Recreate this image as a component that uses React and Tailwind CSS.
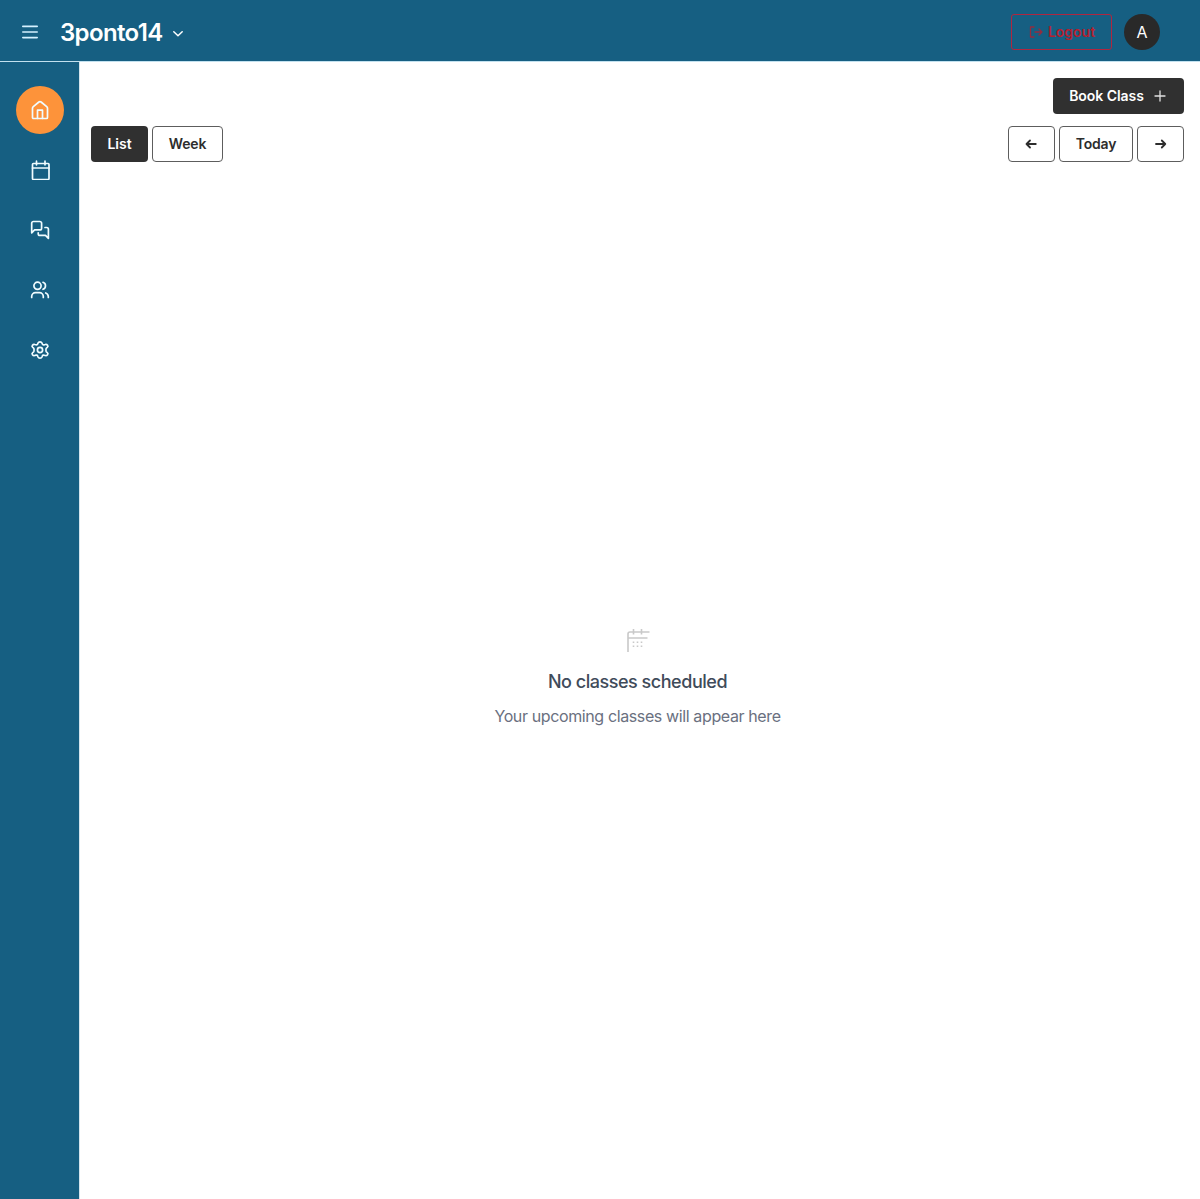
function Icon({ size = 20, width = 1.7, className = '', children }) {
  return (
    <svg
      width={size}
      height={size}
      viewBox={`0 0 ${size} ${size}`}
      fill="none"
      stroke="currentColor"
      strokeWidth={width}
      strokeLinecap="round"
      strokeLinejoin="round"
      className={`shrink-0 ${className}`}
    >
      {children}
    </svg>
  );
}

const nav = [
  {
    name: 'Home',
    active: true,
    icon: (
      <>
        <path d="M2.5 8.2c0-.6.3-1.2.8-1.6l5.6-4.6c.7-.6 1.5-.6 2.2 0l5.6 4.6c.5.4.8 1 .8 1.6v9.3c0 .6-.4 1-1 1h-13c-.6 0-1-.4-1-1z" />
        <path d="M7.5 18.300v-8.100h5v8.100" />
      </>
    ),
  },
  {
    name: 'Calendar',
    icon: (
      <>
        <rect x="2.5" y="3.5" width="16.5" height="16" rx="0.9" />
        <path d="M2.5 8h16.5M6.5 1.2v3.6M15 1.2v3.6" />
      </>
    ),
  },
  {
    name: 'Messages',
    icon: (
      <>
        <path d="M11.6 8.2a1.7 1.7 0 0 1-1.7 1.7H4.6L1.7 12.8V3.2a1.7 1.7 0 0 1 1.7-1.7h6.5a1.7 1.7 0 0 1 1.7 1.7z" />
        <path d="M15 7.500h1.700a1.700 1.700 0 0 1 1.700 1.700v9.100l-2.900-2.900H9.900a1.700 1.700 0 0 1-1.700-1.700v-.8" />
      </>
    ),
  },
  {
    name: 'People',
    icon: (
      <>
        <circle cx="7.5" cy="5.8" r="3.6" />
        <path d="M1.7 17.5v-1a3.8 3.8 0 0 1 3.8-3.8h4a3.8 3.8 0 0 1 3.8 3.8v1M13 2.300a3.700 3.700 0 0 1 0 7M15.700 13a3.900 3.900 0 0 1 2.600 3.600v.9" />
      </>
    ),
  },
  {
    name: 'Settings',
    icon: (
      <>
        <path
          transform="translate(-1.6 0) scale(1.16 1)"
          vectorEffect="non-scaling-stroke"
          d="M8.300 3c.3-.9.800-1.200 1.700-1.200s1.400.3 1.700 1.200l.3 1c.2.700.8 1 1.500.8l1-.3c.9-.3 1.500 0 2 .8s.5 1.500-.2 2.100l-.8.7c-.5.500-.5 3.300 0 3.800l.8.7c.7.600.7 1.300.2 2.100s-1.100 1.100-2 .8l-1-.3c-.7-.2-1.300.1-1.500.8l-.3 1c-.3.900-.8 1.200-1.700 1.200s-1.400-.3-1.700-1.200l-.3-1c-.2-.7-.8-1-1.500-.8l-1 .3c-.9.300-1.500 0-2-.8s-.5-1.500.2-2.100l.8-.7c.5-.5.500-3.300 0-3.800l-.8-.7c-.7-.6-.7-1.300-.2-2.100s1.100-1.100 2-.8l1 .3c.7.200 1.300-.1 1.500-.8z"
        />
        <circle cx="10" cy="10" r="2.6" />
      </>
    ),
  },
];

function Header() {
  return (
    <header className="flex h-[62px] shrink-0 items-center border-b border-[#c2e1ef] bg-[#165f82] pt-[3px] pr-10 pl-5 text-white">
      <button aria-label="Menu" className="text-[#d5f1ff]">
        <Icon width={1.6} className="block"><path d="M2.8 4.4h14.4M2.8 10h14.4M2.8 15.6h14.4" /></Icon>
      </button>
      <button className="ml-5 flex items-center pt-0.5">
        <span className="text-2xl font-semibold tracking-[-0.65px]">3ponto14</span>
        <Icon size={12} width={1.5} className="mt-0.5 ml-[9px]"><path d="M1.8 3.8 6 7.8l4.2-4" /></Icon>
      </button>
      <button className="ml-auto flex h-9 w-[101px] items-center justify-center rounded-[3px] border border-[#b0263f] text-sm font-semibold text-[#b4202f]">
        <Icon size={16} width={1.3} className="mr-1 opacity-80"><path d="M6 3H2.5v10H6M7 8h7M11 5l3 3-3 3" /></Icon>
        Logout
      </button>
      <div className="ml-3 flex size-9 items-center justify-center rounded-full bg-[#292929] text-base">A</div>
    </header>
  );
}

function Outline({ children, className, label }) {
  return (
    <button aria-label={label} className={`flex h-9 items-center justify-center rounded-[4px] border border-[#5d5d5d] text-sm font-semibold text-[#2d2d2d] ${className}`}>
      {children}
    </button>
  );
}

export default function App() {
  return (
    <div className="flex h-[1199px] w-[1200px] flex-col bg-white font-['Inter',sans-serif]">
      <Header />
      <div className="flex min-h-0 flex-1">
        <aside className="flex w-[79px] shrink-0 flex-col items-center gap-3 bg-[#165f82] pt-6 pl-px">
          {nav.map((item) => (
            <button
              key={item.name}
              aria-label={item.name}
              className={`flex size-12 items-center justify-center rounded-full text-[#f0fcff] ${item.active ? 'bg-[#fd933a]' : ''}`}
            >
              <Icon>{item.icon}</Icon>
            </button>
          ))}
        </aside>
        <main className="flex flex-1 flex-col border-l border-[#d5e5ed] pt-4 pr-4 pl-[11px]">
          <div className="flex justify-end">
            <button className="flex h-9 w-[131px] items-center justify-center rounded-[4px] bg-[#303030] text-sm font-semibold text-white">
              <span className="tracking-[-0.05px]">Book Class</span>
              <Icon size={16} width={1.3} className="ml-2 text-[#e0e0e0]"><path d="M8 3v10M3 8h10" /></Icon>
            </button>
          </div>
          <div className="mt-3 flex justify-between">
            <div className="flex gap-1">
              <button className="h-9 w-[57px] rounded-[4px] bg-[#303030] text-sm font-semibold text-white">List</button>
              <Outline className="w-[71px] tracking-[-0.15px]">Week</Outline>
            </div>
            <div className="flex gap-1">
              <Outline label="Previous" className="w-[47px]">
                <Icon size={14} width={1.8} className="mr-px"><path d="M11.8 7H2.5M6 3.500 2.500 7 6 10.500" /></Icon>
              </Outline>
              <Outline className="w-[74px] tracking-[-0.15px]">Today</Outline>
              <Outline label="Next" className="w-[47px]">
                <Icon size={14} width={1.8}><path d="M2 7h9.300M7.800 3.500 11.300 7 7.800 10.500" /></Icon>
              </Outline>
            </div>
          </div>
          <section className="flex flex-1 flex-col items-center pt-[466px]">
            <svg width="24" height="24" viewBox="0 0 24 24" fill="none" stroke="#c9c9c9" strokeWidth="1.6" className="mr-px ml-[2px]">
              <path d="M2 24V6a2 2 0 0 1 2-2h19.500M2 10h19.500M7.500 1v5.500M15.500 1v5.500" />
              <path d="M6.700 14.200h1.600m2.400 0h1.600m2.400 0h1.600M6.700 18.200h1.600m2.400 0h1.600m2.400 0h1.600" />
            </svg>
            <h2 className="mt-4 text-lg leading-7 font-medium tracking-[-0.47px] text-[#3f4b5a]">No classes scheduled</h2>
            <p className="mt-2 text-base leading-6 tracking-[-0.38px] text-[#6a7080]">Your upcoming classes will appear here</p>
          </section>
        </main>
      </div>
    </div>
  );
}
